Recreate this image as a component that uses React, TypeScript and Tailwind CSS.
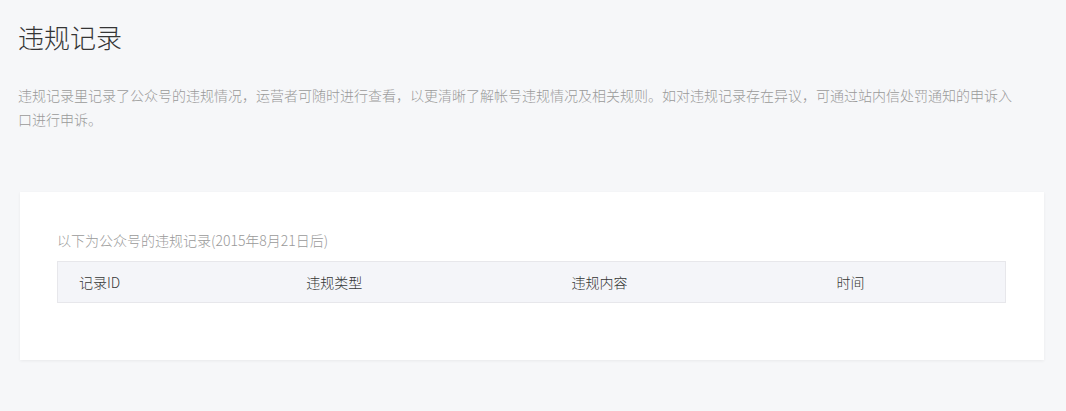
const COLUMNS = [
  { key: 'id', label: '记录ID', width: 'w-[24%]' },
  { key: 'type', label: '违规类型', width: 'w-[28%]' },
  { key: 'content', label: '违规内容', width: 'w-[28%]' },
  { key: 'time', label: '时间', width: 'w-[20%]' },
];

const FONT = '[font-family:"Noto_Sans_CJK_SC","Noto_Sans",sans-serif]';

export default function App() {
  return (
    <div className={`min-h-screen bg-[#f6f7f9] px-[18px] pt-[24px] pb-[50px] font-light ${FONT}`}>
      <h1 className="text-[26px] leading-[26px] font-light text-[#353535]">违规记录</h1>

      <p className="mt-[33px] w-[1004px] text-[14px] leading-[24px] text-[#9a9a9a]">
        违规记录里记录了公众号的违规情况，运营者可随时进行查看，以更清晰了解帐号违规情况及相关规则。如对违规记录存在异议，可通过站内信处罚通知的申诉入口进行申诉。
      </p>

      {/* records card */}
      <div className="mt-[61px] ml-[2px] w-[1024px] bg-white pt-[38px] pr-[38px] pb-[57px] pl-[37px] shadow-[0_1px_3px_rgba(0,0,0,0.06)]">
        <p className="text-[14px] leading-[20px] text-[#9a9a9a]">以下为公众号的违规记录(2015年8月21日后)</p>
        <div className="mt-[11px] flex h-[42px] items-center border border-[#e7e7eb] bg-[#f4f5f9]">
          {COLUMNS.map((c) => (
            <div key={c.key} className={`${c.width} pl-[21px] text-[14px] leading-[20px] text-[#353535]`}>
              {c.label}
            </div>
          ))}
        </div>
      </div>
    </div>
  );
}
